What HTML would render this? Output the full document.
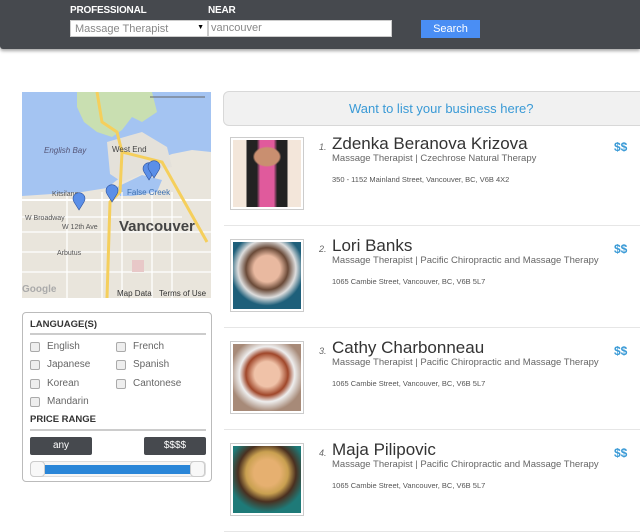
<!DOCTYPE html>
<html><head><meta charset="utf-8"><style>
*{margin:0;padding:0;box-sizing:border-box}
body{width:640px;height:523px;overflow:hidden;background:#fff;font-family:"Liberation Sans",sans-serif;position:relative}
.hdr{position:absolute;left:0;top:0;width:640px;height:49px;background:#46494e;box-shadow:0 2px 3px rgba(0,0,0,.35);border-bottom-left-radius:3px}
.lbl{position:absolute;top:5px;color:#fff;font-size:10px;font-weight:bold;letter-spacing:-.2px}
.sel{position:absolute;left:70px;top:20px;width:138px;height:17px;background:#fff;border:1px solid #ccc;font-size:11px;color:#888;padding:2px 4px}
.inp{position:absolute;left:208px;top:20px;width:184px;height:17px;background:#fff;border:1px solid #ccc;font-size:11px;color:#888;padding:1px 2px}
.btn{position:absolute;left:421px;top:20px;width:59px;height:18px;background:#4a8ef4;color:#fff;font-size:11px;text-align:center;line-height:18px}
.map{position:absolute;left:22px;top:92px;width:189px;height:206px;overflow:hidden}
.banner{position:absolute;left:223px;top:91px;width:430px;height:35px;background:#f1f1f1;border:1px solid #d8d8d8;border-radius:6px;color:#3a9ad6;font-size:13px;line-height:33px;padding-left:125px}
.item{position:absolute;left:224px;width:416px;height:96px;border-bottom:1px solid #e6e6e6}
.ph{position:absolute;left:6px;top:7px;width:74px;height:73px;border:1px solid #ccc;padding:2px;background:#fff}
.ph div{width:100%;height:100%}
.num{position:absolute;left:95px;top:12px;font-size:9px;font-style:italic;color:#666}
.nm{position:absolute;left:108px;top:4px;font-size:17px;color:#333}
.sub{position:absolute;left:108px;top:23px;font-size:9.5px;color:#666}
.adr{position:absolute;left:108px;top:45px;font-size:7.5px;color:#555}
.pr{position:absolute;left:390px;top:10px;font-size:12px;color:#3a9ad6;font-weight:bold}
.box{position:absolute;left:22px;top:312px;width:190px;height:170px;border:1px solid #bbb;border-radius:4px;background:#fff}
.h{position:absolute;left:7px;font-size:9.5px;font-weight:bold;color:#333}
.line{position:absolute;left:7px;width:176px;height:2px;background:#ccc}
.cb{position:absolute;font-size:10px;color:#666}
.cb:before{content:"";position:absolute;left:-17px;top:1px;width:8px;height:8px;border:1px solid #aaa;border-radius:2px;background:#eee}
.pb{position:absolute;top:124px;width:62px;height:18px;background:#46494e;border-radius:2px;color:#fff;font-size:10px;text-align:center;line-height:18px}
</style></head><body>
<div class="hdr">
<div class="lbl" style="left:70px">PROFESSIONAL</div>
<div class="lbl" style="left:208px">NEAR</div>
<div class="sel">Massage Therapist<span style="position:absolute;right:3px;top:3px;font-size:7px;color:#000">▼</span></div>
<div class="inp">vancouver</div>
<div class="btn">Search</div>
</div>
<div class="map">
<svg width="189" height="206" viewBox="0 0 189 206">
<rect width="189" height="206" fill="#e9e5dc"/>
<path d="M0 0H189V60L170 58 150 62 130 70 110 80 95 88 85 96 60 100 30 102 0 104Z" fill="#a4c4f2"/>
<path d="M55 0H130L135 20 120 30 110 25 100 38 90 45 75 40 62 30 55 15Z" fill="#c9dfb1"/>
<path d="M85 50L120 40 145 55 150 75 130 78 100 90 88 82Z" fill="#e4e1da"/>
<path d="M95 95L120 83 140 88 135 100 110 104 98 104Z" fill="#a4c4f2"/>
<path d="M0 108H189" stroke="#fff" stroke-width="2"/>
<path d="M0 125H160M0 140H189M0 160H189M0 180H189M45 100V206M80 100V206M100 100V206M130 100V206M150 100V206" stroke="#fff" stroke-width="1.3"/>
<path d="M75 0L80 30 95 40 100 60 98 100 88 110 85 206M100 60L140 70 185 150" stroke="#f5cf5c" stroke-width="3" fill="none"/>
<rect x="110" y="168" width="12" height="12" fill="#e8c8c8"/>
<text x="22" y="61" font-size="8" font-style="italic" fill="#557" font-family="Liberation Sans">English Bay</text>
<text x="90" y="60" font-size="8" fill="#444" font-family="Liberation Sans">West End</text>
<text x="105" y="103" font-size="8" fill="#3b6fb0" font-family="Liberation Sans">False Creek</text>
<text x="97" y="139" font-size="15" font-weight="bold" fill="#444" font-family="Liberation Sans">Vancouver</text>
<text x="30" y="104" font-size="7" fill="#555" font-family="Liberation Sans">Kitsilano</text>
<text x="3" y="128" font-size="7" fill="#555" font-family="Liberation Sans">W Broadway</text>
<text x="40" y="137" font-size="7" fill="#555" font-family="Liberation Sans">W 12th Ave</text>
<text x="35" y="163" font-size="7" fill="#555" font-family="Liberation Sans">Arbutus</text>
<text x="0" y="200" font-size="10" fill="#aaa" font-weight="bold" font-family="Liberation Sans">Google</text>
<text x="95" y="204" font-size="8" fill="#333" font-family="Liberation Sans">Map Data</text>
<text x="137" y="204" font-size="8" fill="#333" font-family="Liberation Sans">Terms of Use</text>
<line x1="128" y1="5" x2="183" y2="5" stroke="#666"/>
<g fill="#5b8fe8" stroke="#2a4f9a" stroke-width=".6">
<path d="M57 118L52 110A6 6 0 1 1 62 110Z"/><path d="M90 110L85 102A6 6 0 1 1 95 102Z"/>
<path d="M127 88L122 80A6 6 0 1 1 132 80Z"/><path d="M132 86L127 78A6 6 0 1 1 137 78Z"/>
</g>
</svg>
</div>
<div class="banner">Want to list your business here?</div>

<div class="item" style="top:130px"><div class="ph"><div style="background:radial-gradient(ellipse 30% 22% at 50% 25%,#c98f70 60%,transparent 70%),linear-gradient(90deg,#f3e6da 20%,#222 20%,#222 35%,#e05a9c 40%,#e05a9c 60%,#222 65%,#222 80%,#f3e6da 80%)"></div></div>
<div class="num">1.</div><div class="nm">Zdenka Beranova Krizova</div><div class="sub">Massage Therapist | Czechrose Natural Therapy</div><div class="adr">350 - 1152 Mainland Street, Vancouver, BC, V6B 4X2</div><div class="pr">$$</div></div>
<div class="item" style="top:232px"><div class="ph"><div style="background:radial-gradient(circle at 50% 40%,#e9b9a0 25%,#6a4a38 40%,#ddd 55%,#1e5f7a 70%)"></div></div>
<div class="num">2.</div><div class="nm">Lori Banks</div><div class="sub">Massage Therapist | Pacific Chiropractic and Massage Therapy</div><div class="adr">1065 Cambie Street, Vancouver, BC, V6B 5L7</div><div class="pr">$$</div></div>
<div class="item" style="top:334px"><div class="ph"><div style="background:radial-gradient(circle at 50% 45%,#f0c2a8 25%,#a0472a 42%,#eee 55%,#a78a78 75%)"></div></div>
<div class="num">3.</div><div class="nm">Cathy Charbonneau</div><div class="sub">Massage Therapist | Pacific Chiropractic and Massage Therapy</div><div class="adr">1065 Cambie Street, Vancouver, BC, V6B 5L7</div><div class="pr">$$</div></div>
<div class="item" style="top:436px"><div class="ph"><div style="background:radial-gradient(circle at 50% 40%,#e6b070 25%,#c9a050 40%,#4a3020 55%,#1e7a78 75%)"></div></div>
<div class="num">4.</div><div class="nm">Maja Pilipovic</div><div class="sub">Massage Therapist | Pacific Chiropractic and Massage Therapy</div><div class="adr">1065 Cambie Street, Vancouver, BC, V6B 5L7</div><div class="pr">$$</div></div>

<div class="box">
<div class="h" style="top:6px">LANGUAGE(S)</div><div class="line" style="top:20px"></div>
<div class="cb" style="left:24px;top:28px">English</div><div class="cb" style="left:110px;top:28px">French</div>
<div class="cb" style="left:24px;top:46px">Japanese</div><div class="cb" style="left:110px;top:46px">Spanish</div>
<div class="cb" style="left:24px;top:65px">Korean</div><div class="cb" style="left:110px;top:65px">Cantonese</div>
<div class="cb" style="left:24px;top:83px">Mandarin</div>
<div class="h" style="top:101px">PRICE RANGE</div><div class="line" style="top:116px"></div>
<div class="pb" style="left:7px">any</div><div class="pb" style="left:121px">$$$$</div>
<div style="position:absolute;left:7px;top:148px;width:176px;height:16px;border:1px solid #ddd;border-radius:4px;background:#f5f5f5"></div>
<div style="position:absolute;left:22px;top:152px;width:146px;height:9px;background:#2a86d8"></div>
<div style="position:absolute;left:7px;top:148px;width:15px;height:16px;border:1px solid #ccc;border-radius:4px;background:#f8f8f8"></div>
<div style="position:absolute;left:167px;top:148px;width:15px;height:16px;border:1px solid #ccc;border-radius:4px;background:#f8f8f8"></div>
</div>
</body></html>
